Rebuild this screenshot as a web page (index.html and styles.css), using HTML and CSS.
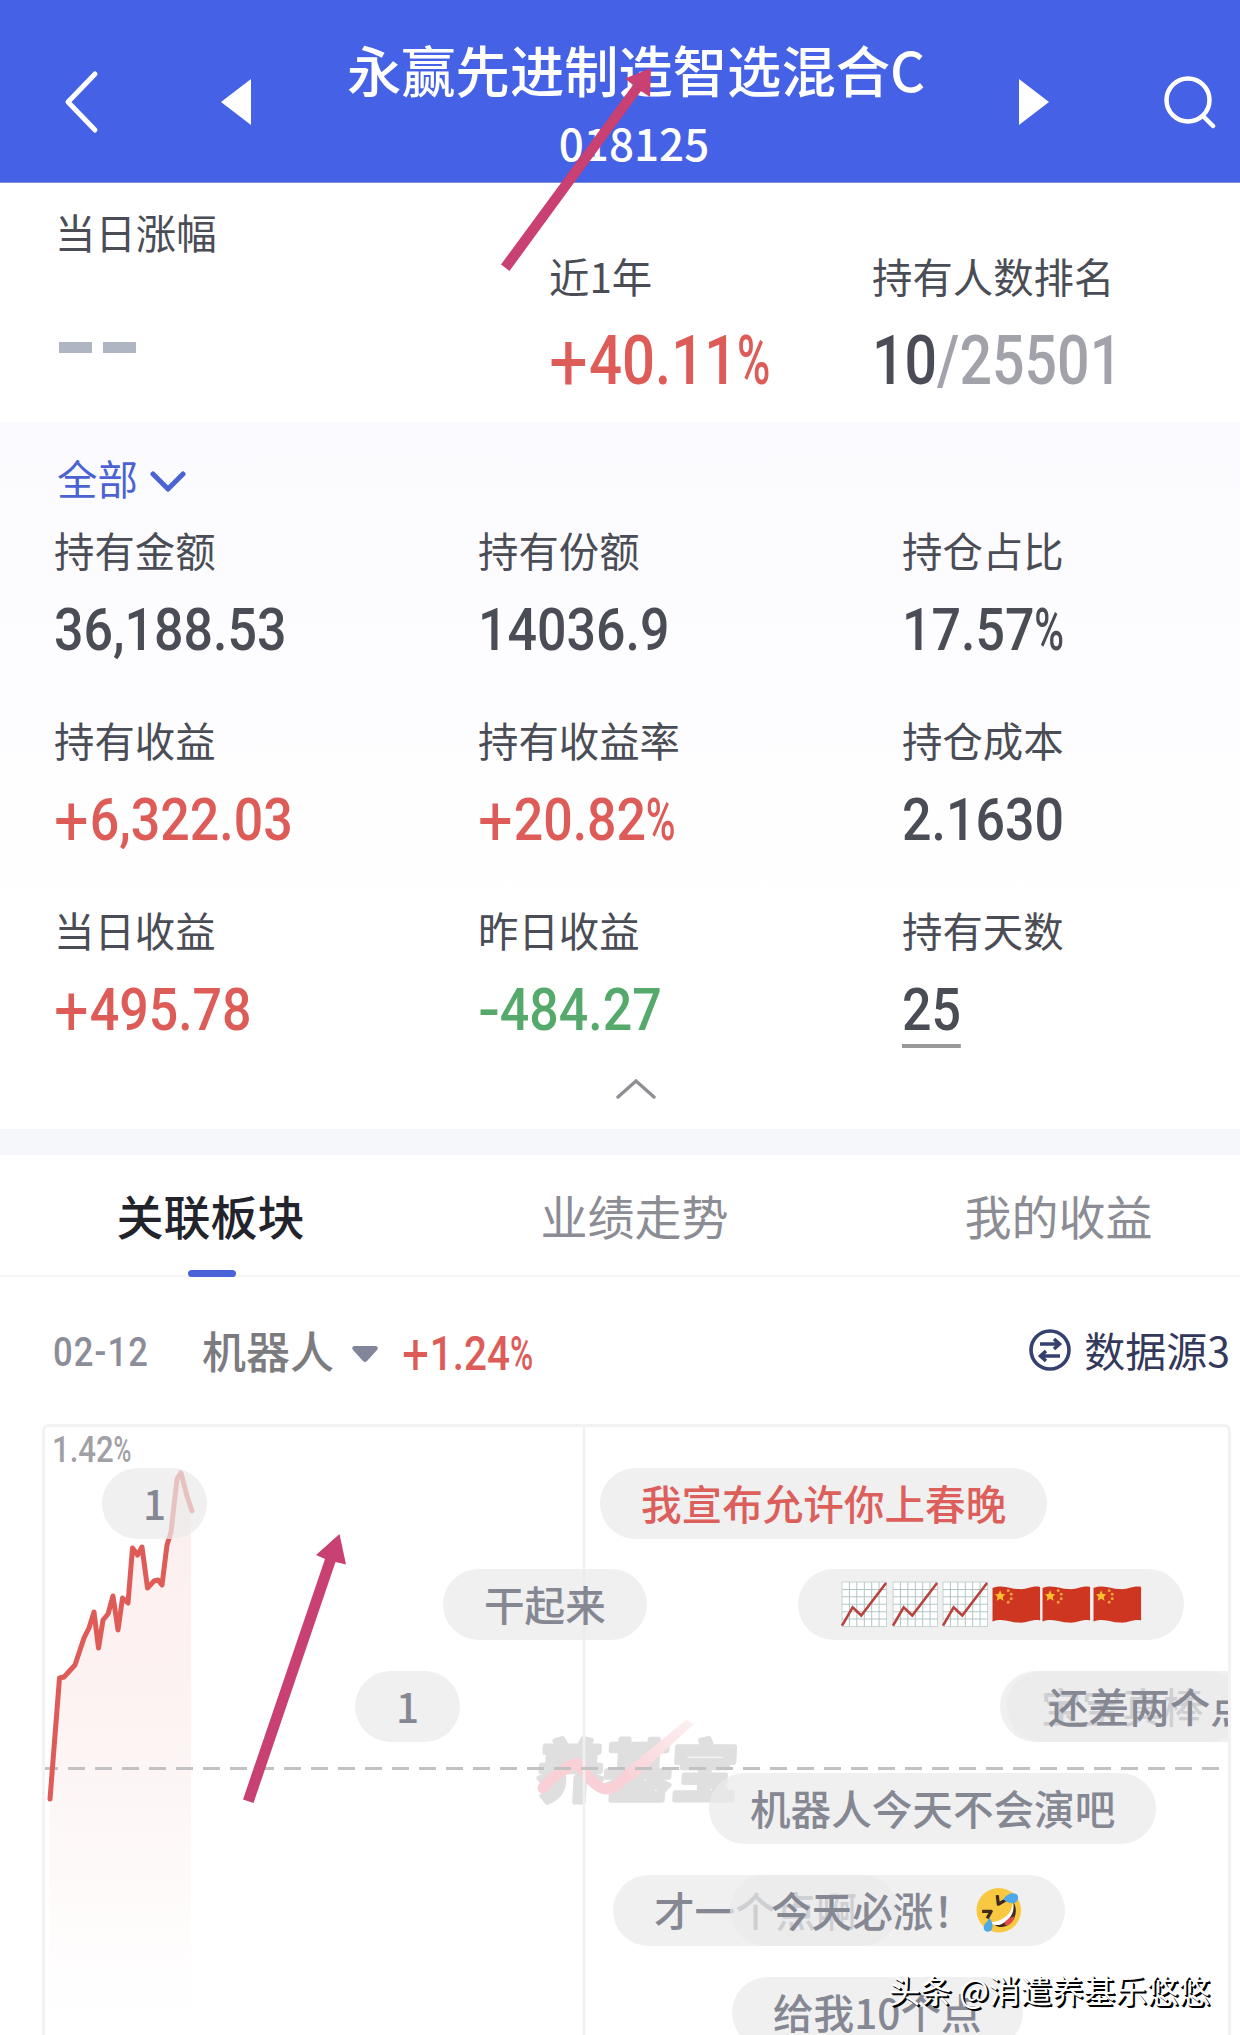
FILE: index.html
```html
<!DOCTYPE html>
<html lang="zh-CN">
<head>
<meta charset="utf-8">
<meta name="viewport" content="width=device-width, initial-scale=1">
<title>永赢先进制造智选混合C</title>
<link rel="stylesheet" href="styles.css">
</head>
<body>

<div class="header">
  <svg class="back" width="36" height="64" viewBox="0 0 36 64"><path d="M32 4 L5 32 L32 60"/></svg>
  <svg class="prev" width="30" height="48" viewBox="0 0 30 48"><path d="M0 24 L30 1 V47 Z"/></svg>
  <div class="title">
    <h1>永赢先进制造智选混合C</h1>
    <p>018125</p>
  </div>
  <svg class="next" width="30" height="48" viewBox="0 0 30 48"><path d="M30 24 L0 1 V47 Z"/></svg>
  <svg class="search" width="54" height="54" viewBox="0 0 54 54"><circle cx="24" cy="25" r="21.500"/><path d="M39 41 L49 51"/></svg>
</div>

<div class="summary">
  <div class="today">
    <div class="label">当日涨幅</div>
    <div class="empty"><i></i><i></i></div>
  </div>
  <div class="year">
    <div class="label">近1年</div>
    <div class="big red"><span class="num"><i class="plus">+</i>40.11<i class="pct">%</i></span></div>
  </div>
  <div class="rank">
    <div class="label">持有人数排名</div>
    <div class="big"><span class="num">10<em>/25501</em></span></div>
  </div>
</div>

<div class="holding">
  <div class="filter"><span>全部</span>
    <svg width="36" height="22" viewBox="0 0 36 22"><path d="M3 3 L18 18 L33 3"/></svg>
  </div>
  <div class="grid">
    <div class="cell"><div class="label">持有金额</div><div class="value"><span class="num">36,188.53</span></div></div>
    <div class="cell"><div class="label">持有份额</div><div class="value"><span class="num">14036.9</span></div></div>
    <div class="cell"><div class="label">持仓占比</div><div class="value"><span class="num">17.57<i class="pct">%</i></span></div></div>
    <div class="cell"><div class="label">持有收益</div><div class="value red"><span class="num"><i class="plus">+</i>6,322.03</span></div></div>
    <div class="cell"><div class="label">持有收益率</div><div class="value red"><span class="num"><i class="plus">+</i>20.82<i class="pct">%</i></span></div></div>
    <div class="cell"><div class="label">持仓成本</div><div class="value"><span class="num">2.1630</span></div></div>
    <div class="cell"><div class="label">当日收益</div><div class="value red"><span class="num"><i class="plus">+</i>495.78</span></div></div>
    <div class="cell"><div class="label">昨日收益</div><div class="value green"><span class="num"><i class="minus">-</i>484.27</span></div></div>
    <div class="cell"><div class="label">持有天数</div><div class="value days"><span class="num">25</span></div></div>
  </div>
  <svg class="collapse" width="40" height="20" viewBox="0 0 40 20"><path d="M2 18 L20 2 L38 18"/></svg>
</div>

<div class="tabs">
  <div class="tab active">关联板块</div>
  <div class="tab">业绩走势</div>
  <div class="tab">我的收益</div>
</div>

<div class="sector">
  <div class="date"><span class="num">02-12</span></div>
  <div class="name">机器人</div>
  <svg class="drop" width="28" height="18" viewBox="0 0 28 18"><path d="M3 1 H25 Q28 2 26 5 L16 16 Q14 18 12 16 L2 5 Q0 2 3 1 Z"/></svg>
  <div class="rate red"><span class="num"><i class="plus">+</i>1.24<i class="pct">%</i></span></div>
  <div class="source">
    <svg width="42" height="42" viewBox="0 0 42 42">
      <circle cx="21" cy="21" r="19"/>
      <path d="M11 15 H30 M25 10 L30.500 15 L25 20 M31 27 H12 M17 22 L11.500 27 L17 32"/>
    </svg>
    <span>数据源3</span>
  </div>
</div>

<svg class="defs" width="0" height="0">
  <defs>
    <symbol id="trend" viewBox="0 0 50 50">
      <rect x="3" y="3" width="44" height="44" fill="#fff" stroke="#c9d3d3"/>
      <path d="M10.300 3V47M17.600 3V47M25 3V47M32.300 3V47M39.600 3V47M3 10.300H47M3 17.600H47M3 25H47M3 32.300H47M3 39.600H47" stroke="#b3c5c5" stroke-width="1"/>
      <path d="M3 46 L13.500 28 L22 36 L46.500 4" fill="none" stroke="#b8433f" stroke-width="2.600"/>
    </symbol>
    <symbol id="flag" viewBox="0 0 50 50">
      <path d="M1.500 9 C12 5 19 10 27 10 C36 11 41 6 48.500 8 V41 C41 39 36 44 27 43 C19 43 12 38 1.500 42 Z" fill="#cf3622"/>
      <path d="M9 11 L10.600 14.800 L14 15 L11.500 17.700 L12.500 21.500 L9 19.400 L5.500 21.500 L6.500 17.700 L4 15 L7.400 14.800 Z" fill="#fcc02e"/>
      <g fill="#f0a93a"><circle cx="17" cy="11.500" r="1.400"/><circle cx="20" cy="15" r="1.400"/><circle cx="20" cy="19.500" r="1.400"/><circle cx="17" cy="23" r="1.400"/></g>
    </symbol>
    <symbol id="rofl" viewBox="0 0 50 50">
      <circle cx="24.500" cy="25" r="22" fill="#f8c840"/>
      <path d="M39 17 C40 28 34 36 20 39 C27 45 39 40 41 29 C42 24 41 20 39 17 Z" fill="#412a1d"/>
      <path d="M38 16 C39 26 31 35 17 37 C20 41 26 40 30 37 C37 32 41 26 38 16 Z" fill="#fff"/>
      <path d="M30 39 C32 34 36 32 40 31 C38 38 34 41 30 39 Z" fill="#e7474c"/>
      <path d="M23 10 L24 19 L31 15 M8 26 L17 26 L13 33" fill="none" stroke="#412a1d" stroke-width="3.200" stroke-linejoin="round"/>
      <path d="M29 14 C33 8 38 7 42 9 C46 13 42 19 37 18 C33 17 31 16 29 14 Z" fill="#4da7e8"/>
      <path d="M15 32 C19 37 20 44 15 46 C10 47 8 42 11 38 C13 36 14 35 15 32 Z" fill="#4da7e8"/>
    </symbol>
    <linearGradient id="area" x1="0" y1="1470" x2="0" y2="2020" gradientUnits="userSpaceOnUse">
      <stop offset="0" stop-color="#fdeeee"/>
      <stop offset="0.450" stop-color="#fdf3f3"/>
      <stop offset="1" stop-color="#ffffff"/>
    </linearGradient>
    <linearGradient id="fade" x1="0" y1="1" x2="1" y2="0">
      <stop offset="0" stop-color="#f9d0d6"/>
      <stop offset="1" stop-color="#fdf0f1"/>
    </linearGradient>
  </defs>
</svg>

<div class="chart">
  <svg class="plot" width="1189" height="611" viewBox="42 1424 1189 611">
    <path d="M49 2035 L50 1799 L59.500 1678 L64 1677 L75 1665 L84 1638 L89 1628 L94 1612 L98.500 1648 L103 1620 L108 1614 L113 1596 L118 1630 L122.500 1598 L128 1603 L132.500 1548 L137.500 1555 L142 1547 L147.500 1588 L154 1581 L158 1580 L162 1585 L167 1545 L171 1532 L177 1479 L181 1473 L187 1496 L191 1510 V2035 Z" fill="url(#area)"/>
    <g class="mark">
      <text transform="translate(536 1796) skewX(-3)">养基宝</text>
      <path class="swoosh" d="M543 1788 C554 1775 564 1768 577 1763 C586 1772 594 1788 606 1789 C615 1789 621 1781 630 1773"/>
      <path class="tail" d="M625 1770 L686 1720 L694 1724 L633 1780 Z"/>
    </g>
    <path d="M584 1424 V2035" stroke="#f1f1f4" stroke-width="2.500"/>
    <path class="zero" d="M44 1768.500 H1219"/>
    <path class="line" d="M50 1799 L59.500 1678 L64 1677 L75 1665 L84 1638 L89 1628 L94 1612 L98.500 1648 L103 1620 L108 1614 L113 1596 L118 1630 L122.500 1598 L128 1603 L132.500 1548 L137.500 1555 L142 1547 L147.500 1588 L154 1581 L158 1580 L162 1585 L167 1545 L171 1532 L177 1479 L181 1473 L187 1496 L192 1511"/>
  </svg>
  <div class="top-label"><span class="num">1.42<i class="pct">%</i></span></div>

  <!-- 弹幕 -->
  <div class="pill p1">1</div>
  <div class="pill p2 red">我宣布允许你上春晚</div>
  <div class="pill p3">干起来</div>
  <div class="pill p4"><svg><use href="#trend"/></svg><svg><use href="#trend"/></svg><svg><use href="#trend"/></svg><svg><use href="#flag"/></svg><svg><use href="#flag"/></svg><svg><use href="#flag"/></svg></div>
  <div class="pill p5">1</div>
  <div class="pill p6">宝宝真棒</div>
  <div class="pill p7">还差两个点</div>
  <div class="pill p8">机器人今天不会演吧</div>
  <div class="pill p9">才一个点啊</div>
  <div class="pill p10">今天必涨！<svg><use href="#rofl"/></svg></div>
  <div class="pill p11">给我10个点</div>
</div>

<svg class="arrows" width="1240" height="2035" viewBox="0 0 1240 2035">
  <path d="M501 264.500 L633 85 L625 78.500 L651 68 L650 97 L641 91 L509.500 271 Z"/>
  <path d="M243 1799.500 L325 1559 L316 1555 L339.500 1534 L346 1564.500 L335.500 1562 L253.500 1803 Z"/>
</svg>
<div class="author">头条 @消遣养基乐悠悠</div>

</body>
</html>
```

FILE: styles.css
```css
* {
  box-sizing: border-box;
}

body {
  margin: 0;
  width: 1240px;
  height: 2035px;
  position: relative;
  overflow: hidden;
  background: #fff;
  color: #4b4d56;
  font-family: "Noto Sans CJK SC", sans-serif;
}

h1, p {
  margin: 0;
}

svg {
  display: block;
  flex: none;
}

.red { color: #de5c58; }
.green { color: #55aa6b; }

/* narrow figures */
.num {
  display: inline-block;
  font-family: Roboto, sans-serif;
  font-weight: 500;
  transform: scaleX(0.865);
  transform-origin: left center;
  white-space: nowrap;
}

.num i {
  display: inline-block;
  font-style: normal;
  font-weight: 400;
  transform-origin: left center;
}

.num .plus { margin-right: 0.12em; transform: translateY(0.03em) scale(1.18); }
.num .minus { margin-right: 0.08em; font-weight: 500; transform: scaleX(1.25); }
.num .pct { font-weight: 500; transform: scaleX(0.78); }

/* Header */
.header {
  display: flex;
  height: 183px;
  padding-left: 63px;
  background: #4561e6;
  border-bottom: 1px solid #7d8bd0;
}

.back { margin-top: 70px; fill: none; stroke: #fff; stroke-width: 5; stroke-linecap: round; stroke-linejoin: round; }
.prev { margin: 78px 0 0 122px; fill: #fff; }
.next { margin: 78px 0 0 94px; fill: #fff; }
.search { margin: 75px 0 0 115px; fill: none; stroke: #fff; stroke-width: 4.5; stroke-linecap: round; }

.title {
  width: 578px;
  margin-left: 96px;
  padding-top: 32px;
  color: #fff;
  text-align: center;
  white-space: nowrap;
}

.title h1 {
  font-size: 54.3px;
  font-weight: 500;
  line-height: 74px;
}

.title p {
  padding-right: 4px;
  font-size: 44px;
  font-weight: 500;
  line-height: 72px;
}

/* Summary */
.summary {
  display: flex;
  height: 239px;
  padding-left: 55px;
}

.label {
  font-size: 40.4px;
  line-height: 50px;
  white-space: nowrap;
}

.today { width: 494px; padding-top: 24px; }
.year { width: 323px; padding-top: 68px; }
.rank { padding-top: 68px; }

.empty {
  display: flex;
  gap: 11px;
  padding: 85px 0 0 4px;
}

.empty i {
  width: 33px;
  height: 11px;
  background: #afb5c3;
}

.big {
  font-size: 69px;
  line-height: 80px;
  margin-top: 13px;
}

.big .num { transform: scaleX(0.83); }
.year .num { transform: scaleX(0.843); }

.big em {
  font-style: normal;
  color: #a2a3aa;
}

/* Holding */
.holding {
  height: 707px;
  padding: 30px 0 0 54px;
  background: linear-gradient(#fbfbff, #fff 75%);
}

.filter {
  display: flex;
  align-items: center;
  gap: 12px;
  height: 50px;
  padding-left: 3px;
  font-size: 40.4px;
  color: #4b63d2;
}

.filter svg { margin-top: 9px; fill: none; stroke: #4b63d2; stroke-width: 5; stroke-linecap: round; stroke-linejoin: round; }

.grid {
  display: grid;
  grid-template-columns: 424px 424px auto;
  grid-auto-rows: 190px;
  padding-top: 23px;
}

.value {
  margin-top: 13px;
  font-size: 60px;
  line-height: 72px;
}

.days .num { position: relative; }

.days .num::after {
  content: "";
  position: absolute;
  left: 0;
  right: 0;
  bottom: -2px;
  height: 4px;
  background: #999;
}

.collapse {
  margin: -16px 0 0 562px;
  fill: none;
  stroke: #8f9096;
  stroke-width: 3.4;
  stroke-linecap: round;
}

/* Tabs */
.tabs {
  display: flex;
  height: 148px;
  border-top: 26px solid #f6f7fb;
  border-bottom: 2px solid #f5f5f8;
}

.tab {
  position: relative;
  width: 424px;
  padding-right: 3px;
  flex: none;
  font-size: 47px;
  line-height: 120px;
  text-align: center;
  color: #8c8d94;
}

.tab:last-child {
  width: 392px;
  padding: 0 0 0 29px;
}

.active {
  color: #22232b;
  font-weight: 500;
}

.active::after {
  content: "";
  position: absolute;
  left: 188px;
  bottom: -2px;
  width: 48px;
  height: 7px;
  border-radius: 4px;
  background: #4a62d8;
}

/* Sector */
.sector {
  display: flex;
  align-items: center;
  height: 147px;
  padding: 0 10px 4px 53px;
}

.date { width: 149px; font-size: 40px; color: #8b8d98; }
.date .num { letter-spacing: 1.3px; }
.name { width: 149px; padding-top: 3px; font-size: 44px; font-weight: 500; color: #7b7b80; }
.drop { fill: #83859a; margin-top: 10px; }
.rate { width: 140px; margin-left: 23px; font-size: 49px; }
.rate .num { transform: scaleX(0.825); }

.source {
  display: flex;
  align-items: center;
  gap: 13px;
  margin-left: auto;
  font-size: 41px;
  color: #34395c;
  white-space: nowrap;
}

.source svg { margin-top: 3px; fill: none; stroke: #34406e; stroke-width: 3.6; }

.defs { position: absolute; }

/* Chart */
.chart {
  position: relative;
  width: 1189px;
  height: 640px;
  margin-left: 42px;
  overflow: hidden;
}

.chart::after {
  content: "";
  position: absolute;
  inset: 0;
  border: 3px solid #f2f2f5;
  border-radius: 7px;
}

.line { fill: none; stroke: #df5b57; stroke-width: 5; stroke-linejoin: round; stroke-linecap: round; }
.zero { stroke: #c2c2c4; stroke-width: 3; stroke-dasharray: 17 10; stroke-dashoffset: 3; }

.mark text {
  font-size: 67px;
  font-weight: 700;
  fill: #dfdfdf;
  stroke: #dfdfdf;
  stroke-width: 5;
  stroke-linejoin: round;
}

.swoosh { fill: none; stroke: #f9d0d6; stroke-width: 11; stroke-linecap: round; stroke-linejoin: round; }
.tail { fill: url(#fade); }

.top-label {
  position: absolute;
  left: 10px;
  top: 1px;
  font-size: 36px;
  line-height: 42px;
  color: #a0a0a6;
}

/* Floating comments */
.pill {
  position: absolute;
  display: flex;
  align-items: center;
  height: 71px;
  padding: 0 41px 3px;
  border-radius: 36px;
  background: rgba(234, 234, 234, 0.72);
  color: #858893;
  font-size: 40.6px;
  font-weight: 500;
  white-space: nowrap;
}

.pill.red { color: #dc5f5c; }
.pill svg { width: 50.6px; height: 50.6px; margin-top: 3px; }

.p1 { left: 60px; top: 44px; }
.p2 { left: 558px; top: 44px; }
.p3 { left: 401px; top: 145px; }
.p4 { left: 756px; top: 145px; }
.p5 { left: 313px; top: 247px; }
.p6 { left: 958px; top: 247px; }
.p7 { left: 965px; top: 247px; }
.p8 { left: 667px; top: 349px; }
.p9 { left: 571px; top: 451px; }
.p10 { left: 688px; top: 451px; }
.p11 { left: 690px; top: 553px; }

/* Marks over the page */
.arrows {
  position: absolute;
  left: 0;
  top: 0;
  fill: #c94172;
}

.author {
  position: absolute;
  right: 30px;
  top: 1966px;
  font-size: 31.6px;
  line-height: 46px;
  color: #fff;
  text-shadow: 1px 1px 0 #000, 2px 2px 0 #000;
  white-space: nowrap;
}
```
